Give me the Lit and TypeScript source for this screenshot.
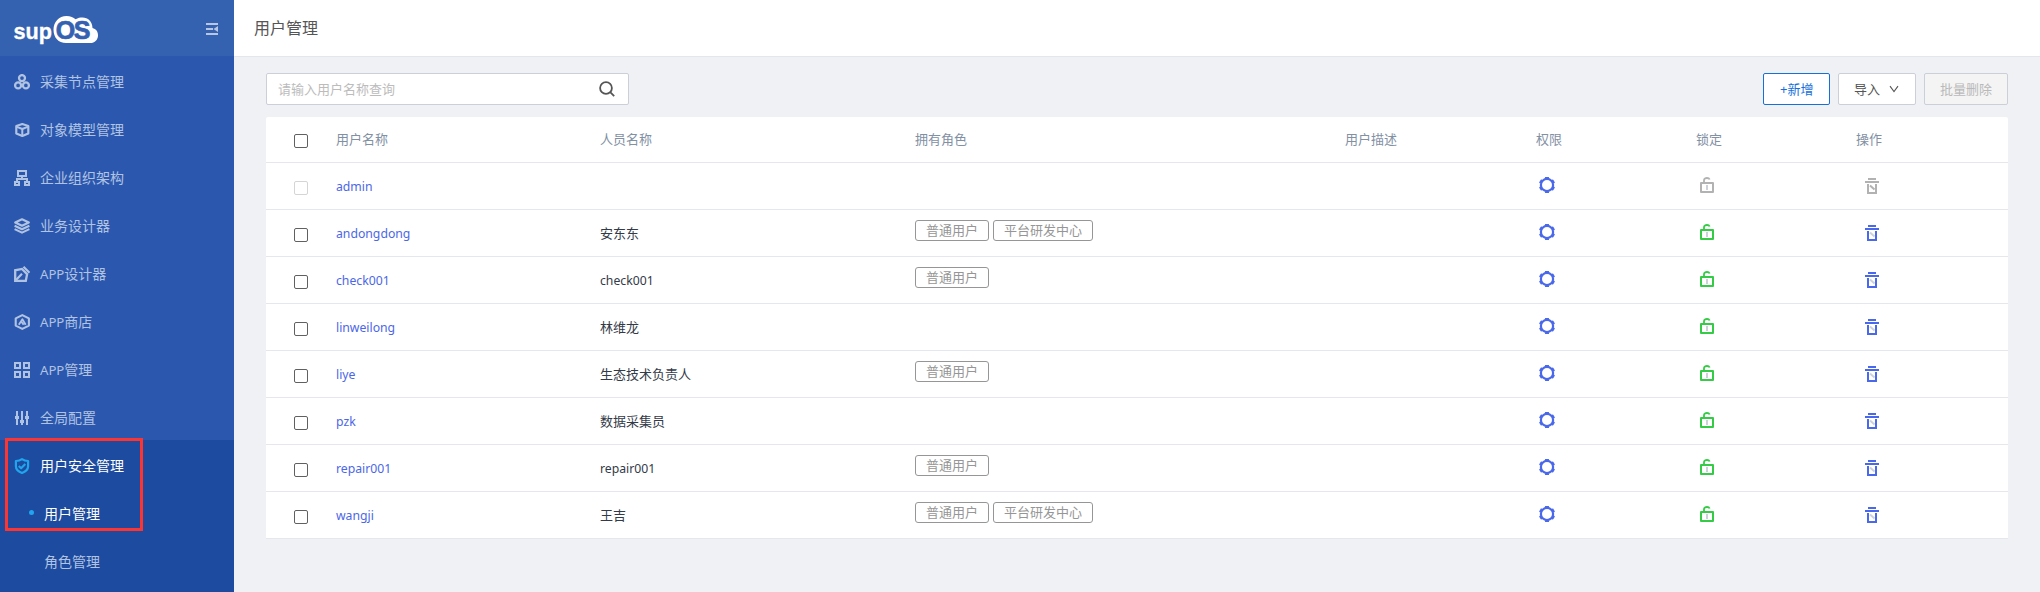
import { LitElement, html, css, svg, nothing } from "lit";
import { customElement, property } from "lit/decorators.js";
import { classMap } from "lit/directives/class-map.js";

const icons: Record<string, unknown> = {
  nodes: svg`<g fill="none" stroke="currentColor" stroke-width="2.3"><circle cx="8" cy="4.1" r="3"/><circle cx="4.1" cy="11.4" r="3"/><circle cx="11.9" cy="11.4" r="3"/></g>`,
  cube: svg`<g fill="none" stroke="currentColor" stroke-width="2.2" stroke-linejoin="round"><path d="M8.300 2 14.300 4V11.500L8.300 14 2.300 11.500V4Z"/><path d="M2.300 4.600 8.300 7 14.300 4.600M8.300 7V14" stroke-width="2"/></g>`,
  org: svg`<g fill="none" stroke="currentColor" stroke-width="2"><path d="M4 1h8v5H4zM8 6V9M3 12V9h10v3"/><path d="M1 12h4v3H1zM11 12h4v3h-4z"/></g>`,
  layers: svg`<g fill="none" stroke="currentColor" stroke-width="2.1" stroke-linejoin="round"><path d="M8 1.300 14.800 4.500 8 7.700 1.200 4.500Z"/><path d="M.6 7.700 8 11.200l7.400-3.500M.6 11.100 8 14.600l7.400-3.500"/></g>`,
  design: svg`<g fill="none" stroke="currentColor" stroke-width="2.3"><path d="M1.200 14.800V4.300L8 2.900l5.100 5.200-1.300 6.700Z"/><path d="M1.500 14.500 8 7.800M9.500.8l6 6" stroke-width="2.200"/></g>`,
  store: svg`<g fill="none" stroke="currentColor" stroke-width="2.100" stroke-linejoin="round"><path d="M8.300 1.100 14.900 4.400v7.200L8.300 14.900 1.700 11.600V4.400Z"/><path d="M4.800 10.800 8.400 5.300l3.300 5.500M7.600 8l2 2.800" stroke-width="1.800"/></g>`,
  grid: svg`<g fill="none" stroke="currentColor" stroke-width="2"><path d="M1 1h5v5H1zM10 1h5v5h-5zM1 10h5v5H1zM10 10h5v5h-5z"/></g>`,
  sliders: svg`<path fill="currentColor" d="M2 1h2v14H2zM7 1h2v14H7zM12 1h2v14h-2zM1 6h4v3H1zM6 10h4v3H6zM11 6h4v3h-4z"/>`,
  shield: svg`<g fill="none" stroke="currentColor" stroke-width="2.200" stroke-linejoin="round"><path d="M8 1.200C6 2.600 4 3 1.900 3v5.300c0 3.200 2.400 5.300 6.100 6.700 3.700-1.400 6.100-3.500 6.100-6.700V3C12 3 10 2.600 8 1.200Z"/><path d="m4.800 8 2.300 2.300L11.300 6"/></g>`,
  gear: svg`<g fill="none" stroke="currentColor"><circle cx="8" cy="8" r="6.100" stroke-width="2.200"/><circle cx="8" cy="8" r="7.200" stroke-width="2" pathLength="60" stroke-dasharray="5 5" transform="rotate(-105 8 8)"/></g>`,
  lock: svg`<path d="M1 6h12v9H1z" fill="none" stroke="currentColor" stroke-width="2" stroke-linejoin="round"/><path d="M4 6V3.300C4 1.500 5.500 1 7 1s2.200.4 2.700 1.500" fill="none" stroke="currentColor" stroke-width="1.800"/><path d="M6 8h2v5H6z" fill="#cdd2da"/>`,
  trash: svg`<path d="M4 0h8v2H4zM1 3h14v2H1zM3 6h2v8h6V6h2v10H3z" fill="currentColor"/><path d="m6 7.500 4.500 4" stroke="var(--slash, #cdd2da)" stroke-width="2"/>`,
};

const icon = (name: string) =>
  html`<svg class="icon" width="16" height="16" viewBox="0 0 16 16">${icons[name]}</svg>`;

/* Latin runs are set slightly smaller than the CJK glyphs beside them. */
const mixed = (text: string) =>
  text.split(/([A-Za-z0-9]+)/).filter(Boolean).map((part) =>
    /^[A-Za-z0-9]/.test(part) ? html`<span class="latin">${part}</span>` : part
  );

const baseFont = css`
  :host {
    font-family: "Noto Sans", "Noto Sans CJK SC", sans-serif;
  }
  .latin {
    font-size: 0.94em;
  }
  .icon {
    display: block;
    flex: none;
  }
`;

@customElement("side-menu")
class SideMenu extends LitElement {
  static styles = [
    baseFont,
    css`
      :host {
        position: relative;
        display: flex;
        flex-direction: column;
        width: 234px;
        background: #2b58ae;
        color: #b1c3e3;
        font-size: 14px;
      }
      .brand {
        display: flex;
        justify-content: space-between;
        height: 56px;
        background: #3561b1;
      }
      .fold {
        margin: 23px 16px 0 0;
        color: #b8c6e2;
      }
      .item {
        display: flex;
        align-items: center;
        box-sizing: border-box;
        height: 48px;
        padding: 4px 0 0 14px;
        gap: 10px;
        line-height: 20px;
      }
      .open {
        flex: 1;
        background: #1d4b9f;
      }
      .active {
        color: #fff;
      }
      .active .icon {
        color: #21a5ee;
      }
      .sub {
        padding-left: 29px;
      }
      .dot {
        width: 5px;
        height: 5px;
        border-radius: 50%;
        margin-bottom: 3px;
      }
      .active .dot {
        background: #21a5ee;
      }
      .label {
        line-height: 20px;
      }
      .highlight {
        position: absolute;
        left: 5px;
        top: 438px;
        width: 132px;
        height: 87px;
        border: 3px solid #fe3431;
      }
    `,
  ];

  private entries: [string, string][] = [
    ["nodes", "采集节点管理"],
    ["cube", "对象模型管理"],
    ["org", "企业组织架构"],
    ["layers", "业务设计器"],
    ["design", "APP设计器"],
    ["store", "APP商店"],
    ["grid", "APP管理"],
    ["sliders", "全局配置"],
  ];

  render() {
    return html`
      <div class="brand">
        <svg width="110" height="56" viewBox="0 0 110 56">
          <text x="13.500" y="39" fill="#fff" stroke="#fff" stroke-width=".3" font-family="Liberation Sans" font-weight="700" font-size="22" textLength="38.500" lengthAdjust="spacingAndGlyphs">sup</text>
          <path fill="#fff" d="M66 43c-7.500 0-12.500-5.500-12.500-13.300C53.500 22 59 16 66.500 16c4 0 7 1.500 9 3.300C78 18 80 17.600 82.500 17.600c5.500 0 9.700 4 10 10.400 3.500.8 5.500 3.500 5.500 7.200 0 4.500-3 7.800-8 7.800Z"/>
          <text y="39.300" fill="#3561b1" stroke="#3561b1" stroke-width=".7" font-family="Liberation Sans" font-weight="700" font-size="25"><tspan x="55.800">O</tspan><tspan x="73.800">S</tspan></text>
        </svg>
        <svg class="fold" width="12" height="12" viewBox="0 0 12 12">
          <path fill="currentColor" d="M0 0h12v2H0zM0 5h7v2H0zM0 10h12v2H0zM7.500 6 12 3v6z"/>
        </svg>
      </div>
      ${this.entries.map(
        ([name, label]) => html`<div class="item">${icon(name)}<span class="label">${mixed(label)}</span></div>`
      )}
      <div class="open">
        <div class="item active">${icon("shield")}<span class="label">用户安全管理</span></div>
        <div class="item sub active"><span class="dot"></span><span class="label">用户管理</span></div>
        <div class="item sub"><span class="dot"></span><span class="label">角色管理</span></div>
      </div>
      <div class="highlight"></div>
    `;
  }
}

interface User {
  login: string;
  name: string;
  roles: string[];
  builtin?: boolean;
}

@customElement("user-table")
class UserTable extends LitElement {
  @property({ attribute: false }) users: User[] = [];

  static styles = [
    baseFont,
    css`
      :host {
        display: block;
        background: #fff;
        border-radius: 2px 2px 0 0;
        font-size: 13px;
        line-height: 20px;
      }
      .row {
        display: grid;
        grid-template-columns: 70px 264px 315px 430px 191px 160px 160px 1fr;
        box-sizing: border-box;
        height: 47px;
        border-bottom: 1px solid #e5e7ed;
        color: #333a48;
      }
      .head {
        height: 46px;
        color: #8290a4;
      }
      .text {
        padding-top: 13px;
      }
      .head .text {
        padding-top: 12px;
      }
      .login {
        color: #4b67e8;
      }
      .check {
        box-sizing: border-box;
        width: 14px;
        height: 14px;
        margin: 18px 0 0 28px;
        border: 1px solid #606060;
        border-radius: 2px;
      }
      .head .check {
        margin-top: 17px;
      }
      .check.off {
        border-color: #d5d5d5;
      }
      .roles {
        display: flex;
        gap: 4px;
        padding-top: 10px;
      }
      .tag {
        box-sizing: border-box;
        height: 21px;
        padding: 0 10px;
        border: 1px solid #969696;
        border-radius: 3px;
        color: #969696;
        line-height: 18px;
      }
      .gear {
        padding: 14px 0 0 3px;
        color: #4a69ea;
      }
      .lock {
        padding: 14px 0 0 4px;
        color: #35cb46;
      }
      .trash {
        padding: 15px 0 0 8px;
        color: #4a69ea;
      }
      .muted {
        color: #b2b2b2;
        --slash: #b2b2b2;
      }
    `,
  ];

  render() {
    return html`
      <div class="row head">
        <span class="check"></span>
        ${["用户名称", "人员名称", "拥有角色", "用户描述", "权限", "锁定", "操作"].map(
          (title) => html`<span class="text">${title}</span>`
        )}
      </div>
      ${this.users.map((user) => {
        const muted = !!user.builtin;
        return html`<div class="row">
          <span class=${classMap({ check: true, off: muted })}></span>
          <span class="text login">${mixed(user.login)}</span>
          <span class="text">${user.name ? mixed(user.name) : nothing}</span>
          <span class="roles">${user.roles.map((role) => html`<span class="tag">${role}</span>`)}</span>
          <span></span>
          <span class="gear">${icon("gear")}</span>
          <span class=${classMap({ lock: true, muted })}>${icon("lock")}</span>
          <span class=${classMap({ trash: true, muted })}>${icon("trash")}</span>
        </div>`;
      })}
    `;
  }
}

@customElement("app-root")
class AppRoot extends LitElement {
  static styles = [
    baseFont,
    css`
      :host {
        display: flex;
        height: 592px;
        overflow: hidden;
        background: #f0f1f5;
        font-size: 13px;
      }
      .main {
        flex: 1;
        display: flex;
        flex-direction: column;
      }
      .title {
        box-sizing: border-box;
        height: 57px;
        padding-left: 20px;
        border-bottom: 1px solid #e3e6ec;
        background: #fff;
        color: #555;
        font-size: 16px;
        line-height: 56px;
      }
      .content {
        padding: 16px 32px 0;
      }
      .toolbar {
        display: flex;
        gap: 8px;
        margin-bottom: 12px;
      }
      .search,
      .button {
        display: flex;
        align-items: center;
        box-sizing: border-box;
        height: 32px;
        border: 1px solid #cbcfd9;
        border-radius: 2px;
        background: #fff;
        line-height: 20px;
      }
      .search {
        justify-content: space-between;
        width: 363px;
        padding: 0 13px 0 11px;
        margin-right: auto;
        color: #bcbcbc;
      }
      .glass {
        margin-bottom: 1px;
      }
      .button {
        padding: 0 15px;
        color: #555;
      }
      .add {
        width: 67px;
        padding-left: 16px;
        border-color: #1670dc;
        color: #1670dc;
        white-space: nowrap;
      }
      .import {
        width: 78px;
        gap: 9px;
      }
      .disabled {
        width: 84px;
        background: #f4f4f4;
        color: #b9b9b9;
      }
    `,
  ];

  private users: User[] = [
    { login: "admin", name: "", roles: [], builtin: true },
    { login: "andongdong", name: "安东东", roles: ["普通用户", "平台研发中心"] },
    { login: "check001", name: "check001", roles: ["普通用户"] },
    { login: "linweilong", name: "林维龙", roles: [] },
    { login: "liye", name: "生态技术负责人", roles: ["普通用户"] },
    { login: "pzk", name: "数据采集员", roles: [] },
    { login: "repair001", name: "repair001", roles: ["普通用户"] },
    { login: "wangji", name: "王吉", roles: ["普通用户", "平台研发中心"] },
  ];

  render() {
    return html`
      <side-menu></side-menu>
      <div class="main">
        <div class="title">用户管理</div>
        <div class="content">
          <div class="toolbar">
            <div class="search">
              <span>请输入用户名称查询</span>
              <svg class="glass" width="16" height="16" viewBox="0 0 16 16">
                <g fill="none" stroke="#555" stroke-width="1.800"><circle cx="7" cy="7" r="5.900"/><path d="m11.200 11.200 4 4"/></g>
              </svg>
            </div>
            <div class="button add">+新增</div>
            <div class="button import">
              <span>导入</span>
              <svg width="10" height="8" viewBox="0 0 10 8">
                <path d="M1 1.200 5 6.500 9 1.200" fill="none" stroke="#555" stroke-width="1.100"/>
              </svg>
            </div>
            <div class="button disabled">批量删除</div>
          </div>
          <user-table .users=${this.users}></user-table>
        </div>
      </div>
    `;
  }
}
